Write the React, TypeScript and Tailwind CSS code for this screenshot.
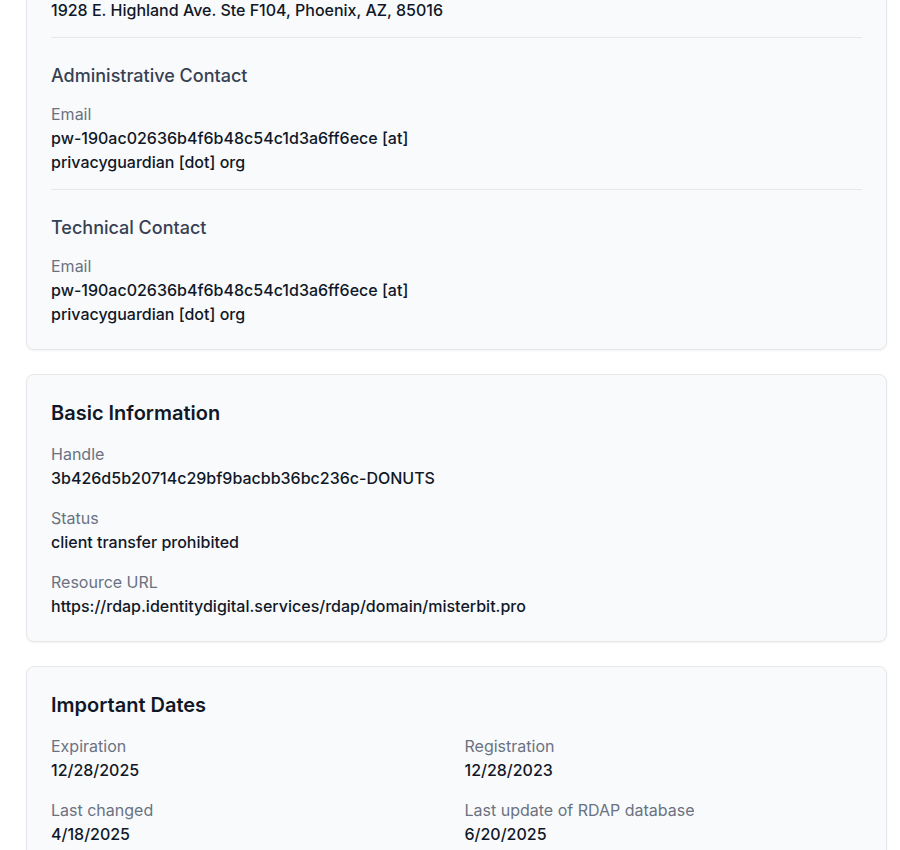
import React from "react"

type Field = { label: string; value: React.ReactNode }

function Item({ label, value }: Field) {
  return (
    <div>
      <div className="text-base leading-6 text-gray-500">{label}</div>
      <div className="text-base leading-6 font-medium text-gray-900">{value}</div>
    </div>
  )
}

function Card({ children, className = "" }: { children: React.ReactNode; className?: string }) {
  return (
    <section className={`rounded-lg border border-gray-200 bg-gray-50 px-6 pt-6 pb-[23px] shadow-xs ${className}`}>
      {children}
    </section>
  )
}

const email = (
  <>
    pw-190ac02636b4f6b48c54c1d3a6ff6ece [at]
    <br />
    privacyguardian [dot] org
  </>
)

export default function App() {
  return (
    <div className="min-h-screen bg-white font-['Inter',sans-serif] antialiased">
      <div className="ml-[26px] w-[861px] flex flex-col gap-6 pb-10">
        {/* Contacts (scrolled, top is out of view) */}
        <Card className="-mt-[51px]">
          <div className="pb-[15px] border-b border-gray-200">
            <Item label="Address" value="1928 E. Highland Ave. Ste F104, Phoenix, AZ, 85016" />
          </div>

          <div className="pt-6 pb-[15px] border-b border-gray-200">
            <h3 className="text-lg leading-7 font-medium text-gray-700 mb-3">Administrative Contact</h3>
            <Item label="Email" value={email} />
          </div>

          <div className="pt-6">
            <h3 className="text-lg leading-7 font-medium text-gray-700 mb-3">Technical Contact</h3>
            <Item label="Email" value={email} />
          </div>
        </Card>

        {/* Basic information */}
        <Card>
          <h2 className="text-xl leading-7 font-semibold text-gray-900 mb-[15px]">Basic Information</h2>
          <div className="flex flex-col gap-4">
            <Item label="Handle" value="3b426d5b20714c29bf9bacbb36bc236c-DONUTS" />
            <Item label="Status" value="client transfer prohibited" />
            <Item label="Resource URL" value="https://rdap.identitydigital.services/rdap/domain/misterbit.pro" />
          </div>
        </Card>

        {/* Dates */}
        <Card>
          <h2 className="text-xl leading-7 font-semibold text-gray-900 mb-[15px]">Important Dates</h2>
          <div className="grid grid-cols-2 gap-4">
            <Item label="Expiration" value="12/28/2025" />
            <Item label="Registration" value="12/28/2023" />
            <Item label="Last changed" value="4/18/2025" />
            <Item label="Last update of RDAP database" value="6/20/2025" />
          </div>
        </Card>
      </div>
    </div>
  )
}
